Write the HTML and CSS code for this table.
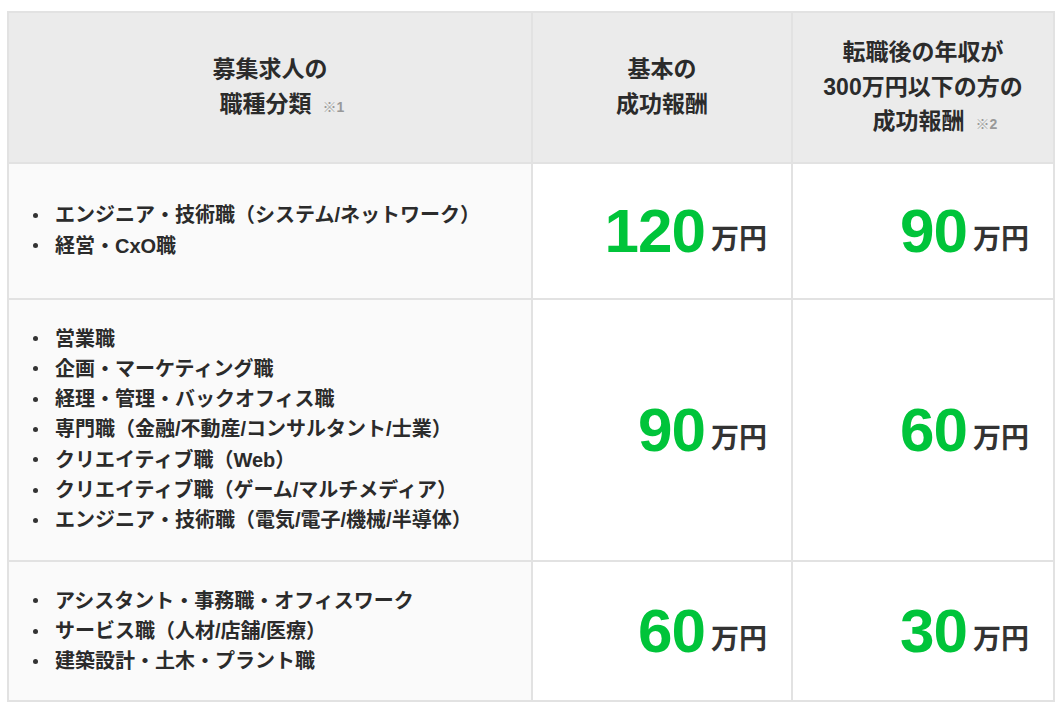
FILE: index.html
```html
<!DOCTYPE html>
<html lang="ja">
<head>
<meta charset="utf-8">
<title>成功報酬</title>
<link rel="stylesheet" href="styles.css">
</head>
<body>
<table class="fee">
  <colgroup>
    <col class="c1">
    <col class="c2">
    <col class="c3">
  </colgroup>
  <thead>
    <tr>
      <th>募集求人の<br>職種分類<span class="note">※1</span></th>
      <th>基本の<br>成功報酬</th>
      <th>転職後の年収が<br>300万円以下の方の<br>成功報酬<span class="note">※2</span></th>
    </tr>
  </thead>
  <tbody>
    <tr>
      <td class="cat">
        <ul>
          <li>エンジニア・技術職（システム/ネットワーク）</li>
          <li>経営・CxO職</li>
        </ul>
      </td>
      <td class="amt"><div class="amount"><span class="num">120</span><span class="unit">万円</span></div></td>
      <td class="amt"><div class="amount"><span class="num">90</span><span class="unit">万円</span></div></td>
    </tr>
    <tr>
      <td class="cat">
        <ul>
          <li>営業職</li>
          <li>企画・マーケティング職</li>
          <li>経理・管理・バックオフィス職</li>
          <li>専門職（金融/不動産/コンサルタント/士業）</li>
          <li>クリエイティブ職（Web）</li>
          <li>クリエイティブ職（ゲーム/マルチメディア）</li>
          <li>エンジニア・技術職（電気/電子/機械/半導体）</li>
        </ul>
      </td>
      <td class="amt"><div class="amount"><span class="num">90</span><span class="unit">万円</span></div></td>
      <td class="amt"><div class="amount"><span class="num">60</span><span class="unit">万円</span></div></td>
    </tr>
    <tr>
      <td class="cat">
        <ul>
          <li>アシスタント・事務職・オフィスワーク</li>
          <li>サービス職（人材/店舗/医療）</li>
          <li>建築設計・土木・プラント職</li>
        </ul>
      </td>
      <td class="amt"><div class="amount"><span class="num">60</span><span class="unit">万円</span></div></td>
      <td class="amt"><div class="amount"><span class="num">30</span><span class="unit">万円</span></div></td>
    </tr>
  </tbody>
</table>
</body>
</html>
```

FILE: styles.css
```css
html, body {
  margin: 0;
  background: #ffffff;
}
body {
  padding: 11px 8px 0 7px;
  font-family: "Liberation Sans", "Noto Sans CJK JP", sans-serif;
  color: #333333;
  font-weight: bold;
}
.fee {
  width: 1046px;
  border-collapse: collapse;
  table-layout: fixed;
  border: 2px solid #e2e2e2;
}
.c1 { width: 524px; }
.c2 { width: 260px; }
.c3 { width: 262px; }
.fee th,
.fee td {
  border: 2px solid #e2e2e2;
  padding: 24px 24px;
  vertical-align: middle;
}
.fee th {
  background: #ebebeb;
  font-size: 23px;
  line-height: 34.5px;
  text-align: center;
  font-weight: bold;
  color: #2b2b2b;
  padding-top: 22px;
  padding-bottom: 23px;
}
.note {
  font-size: 14px;
  line-height: 1;
  color: #999999;
  font-weight: bold;
  margin-left: 11px;
  margin-right: -24px;
}
.cat {
  background: #fafafa;
  padding-left: 26px;
}
.cat ul {
  list-style: none;
  margin: 0;
  padding: 0;
}
.cat li {
  display: flex;
  align-items: center;
  font-size: 20px;
  line-height: 30.3px;
  color: #2b2b2b;
}
.cat li::before {
  content: "";
  flex: none;
  width: 5px;
  height: 5px;
  border-radius: 50%;
  background: #333333;
  margin-right: 17px;
}
.amt {
  background: #ffffff;
}
.amount {
  display: flex;
  justify-content: flex-end;
  align-items: center;
  height: 86px;
  white-space: nowrap;
}
.num {
  font-size: 62px;
  line-height: 1;
  color: #00c43a;
  font-weight: bold;
  letter-spacing: -1px;
}
.unit {
  font-size: 28px;
  line-height: 1;
  color: #333333;
  font-weight: bold;
  margin-left: 6px;
  margin-top: 18px;
}
```
